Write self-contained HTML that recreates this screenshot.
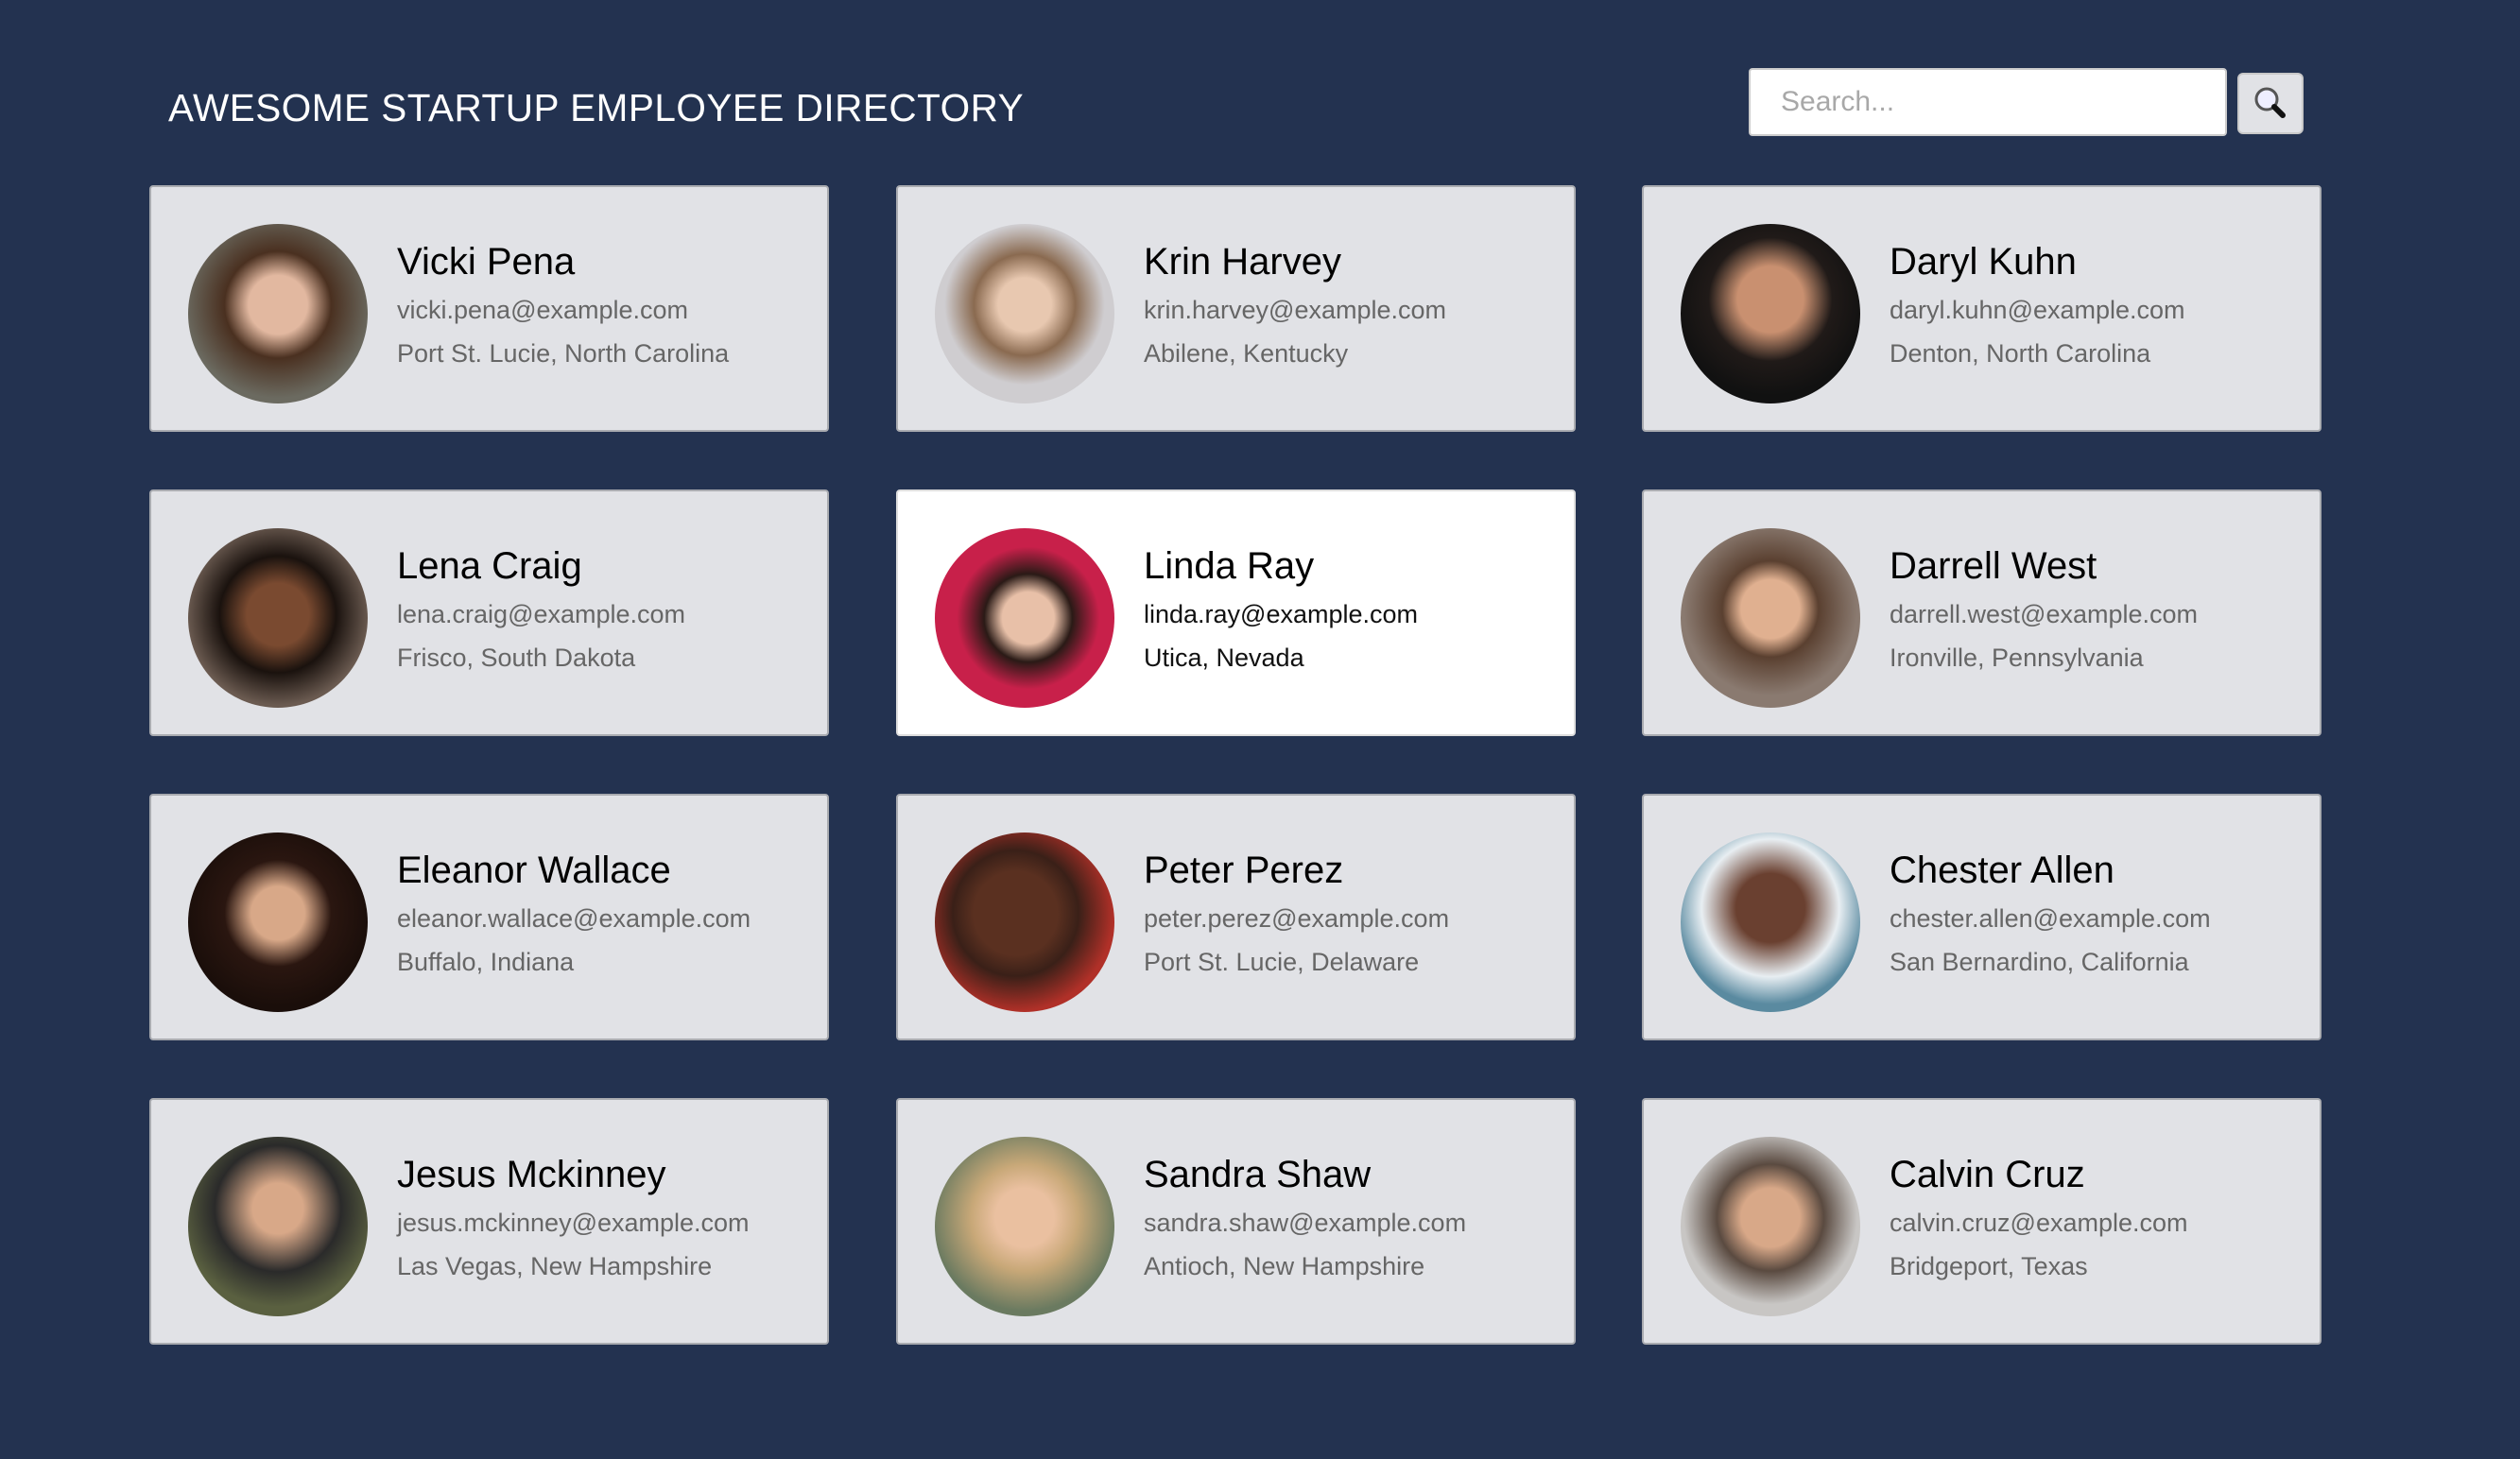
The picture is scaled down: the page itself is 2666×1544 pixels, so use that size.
<!DOCTYPE html>
<html><head><meta charset="utf-8">
<style>
html,body{margin:0;padding:0}
body{width:2666px;height:1544px;background:#233250;position:relative;overflow:hidden;font-family:"Liberation Sans",sans-serif}
h1{position:absolute;left:178px;top:89px;margin:0;font-size:40.5px;font-weight:normal;color:#fff;letter-spacing:0.5px;line-height:50px}
.search{position:absolute;left:1850px;top:72px;width:506px;height:72px;background:#fff;border:2px solid #ccc;border-radius:4px;box-sizing:border-box}
.search span{position:absolute;left:32px;top:17px;font-size:30px;color:#a8a8a8}
.btn{position:absolute;left:2367px;top:77px;width:70px;height:65px;background:#e1e2e6;border:2px solid #c8c8c8;border-radius:6px;box-sizing:border-box}
.card{position:absolute;width:719px;height:261px;background:#e1e2e6;border:2px solid #a9abb0;border-radius:4px;box-sizing:border-box}
.card.sel{background:#fff;border-color:#ddd}
.av{position:absolute;left:39px;top:39px;width:190px;height:190px;border-radius:50%}
.nm{position:absolute;left:260px;top:57px;font-size:40px;color:#000;white-space:nowrap}
.em{position:absolute;left:260px;top:115px;font-size:27px;color:#666;white-space:nowrap}
.lc{position:absolute;left:260px;top:161px;font-size:27px;color:#666;white-space:nowrap}
.sel .em,.sel .lc{color:#111}
</style></head><body>
<h1>AWESOME STARTUP EMPLOYEE DIRECTORY</h1>
<div class="search"><span>Search...</span></div>
<div class="btn"><svg width="66" height="61" viewBox="0 0 66 61"><circle cx="29" cy="26" r="11" fill="#eef" stroke="#555" stroke-width="3"/><line x1="37" y1="34" x2="46" y2="43" stroke="#111" stroke-width="6" stroke-linecap="round"/></svg></div>

<div class="card" style="left:158px;top:196px"><div class="av" style="background:radial-gradient(circle at 50% 45%,#e2b8a0 0 22%,#4a3020 40%,#6b6a60 70%)"></div><div class="nm">Vicki Pena</div><div class="em">vicki.pena@example.com</div><div class="lc">Port St. Lucie, North Carolina</div></div>
<div class="card" style="left:948px;top:196px"><div class="av" style="background:radial-gradient(circle at 50% 45%,#e8c8b0 0 20%,#8a6a50 38%,#cfcdd0 60%)"></div><div class="nm">Krin Harvey</div><div class="em">krin.harvey@example.com</div><div class="lc">Abilene, Kentucky</div></div>
<div class="card" style="left:1737px;top:196px"><div class="av" style="background:radial-gradient(circle at 50% 42%,#c99070 0 24%,#201a18 45%,#111 70%)"></div><div class="nm">Daryl Kuhn</div><div class="em">daryl.kuhn@example.com</div><div class="lc">Denton, North Carolina</div></div>

<div class="card" style="left:158px;top:518px"><div class="av" style="background:radial-gradient(circle at 50% 48%,#7a4a30 0 24%,#1a120e 45%,#6a5a50 70%)"></div><div class="nm">Lena Craig</div><div class="em">lena.craig@example.com</div><div class="lc">Frisco, South Dakota</div></div>
<div class="card sel" style="left:948px;top:518px"><div class="av" style="background:radial-gradient(circle at 52% 50%,#e8c0a8 0 20%,#2a1a16 34%,#c8204a 55%)"></div><div class="nm">Linda Ray</div><div class="em">linda.ray@example.com</div><div class="lc">Utica, Nevada</div></div>
<div class="card" style="left:1737px;top:518px"><div class="av" style="background:radial-gradient(circle at 50% 45%,#e0b090 0 22%,#5a4030 36%,#8a7a70 65%)"></div><div class="nm">Darrell West</div><div class="em">darrell.west@example.com</div><div class="lc">Ironville, Pennsylvania</div></div>

<div class="card" style="left:158px;top:840px"><div class="av" style="background:radial-gradient(circle at 50% 45%,#d8a888 0 20%,#2a1610 40%,#1a0e0a 70%)"></div><div class="nm">Eleanor Wallace</div><div class="em">eleanor.wallace@example.com</div><div class="lc">Buffalo, Indiana</div></div>
<div class="card" style="left:948px;top:840px"><div class="av" style="background:radial-gradient(circle at 45% 45%,#5a3020 0 30%,#3a2018 45%,#b03028 70%)"></div><div class="nm">Peter Perez</div><div class="em">peter.perez@example.com</div><div class="lc">Port St. Lucie, Delaware</div></div>
<div class="card" style="left:1737px;top:840px"><div class="av" style="background:radial-gradient(circle at 50% 42%,#6a4030 0 25%,#e8eef2 50%,#5a8aa0 70%)"></div><div class="nm">Chester Allen</div><div class="em">chester.allen@example.com</div><div class="lc">San Bernardino, California</div></div>

<div class="card" style="left:158px;top:1162px"><div class="av" style="background:radial-gradient(circle at 50% 40%,#d8a888 0 18%,#2a2a2a 45%,#5a6040 70%)"></div><div class="nm">Jesus Mckinney</div><div class="em">jesus.mckinney@example.com</div><div class="lc">Las Vegas, New Hampshire</div></div>
<div class="card" style="left:948px;top:1162px"><div class="av" style="background:radial-gradient(circle at 50% 45%,#eac0a0 0 22%,#c8a878 40%,#6a7a60 70%)"></div><div class="nm">Sandra Shaw</div><div class="em">sandra.shaw@example.com</div><div class="lc">Antioch, New Hampshire</div></div>
<div class="card" style="left:1737px;top:1162px"><div class="av" style="background:radial-gradient(circle at 50% 45%,#d8a888 0 22%,#5a4a40 40%,#c8c6c4 65%)"></div><div class="nm">Calvin Cruz</div><div class="em">calvin.cruz@example.com</div><div class="lc">Bridgeport, Texas</div></div>
</body></html>
